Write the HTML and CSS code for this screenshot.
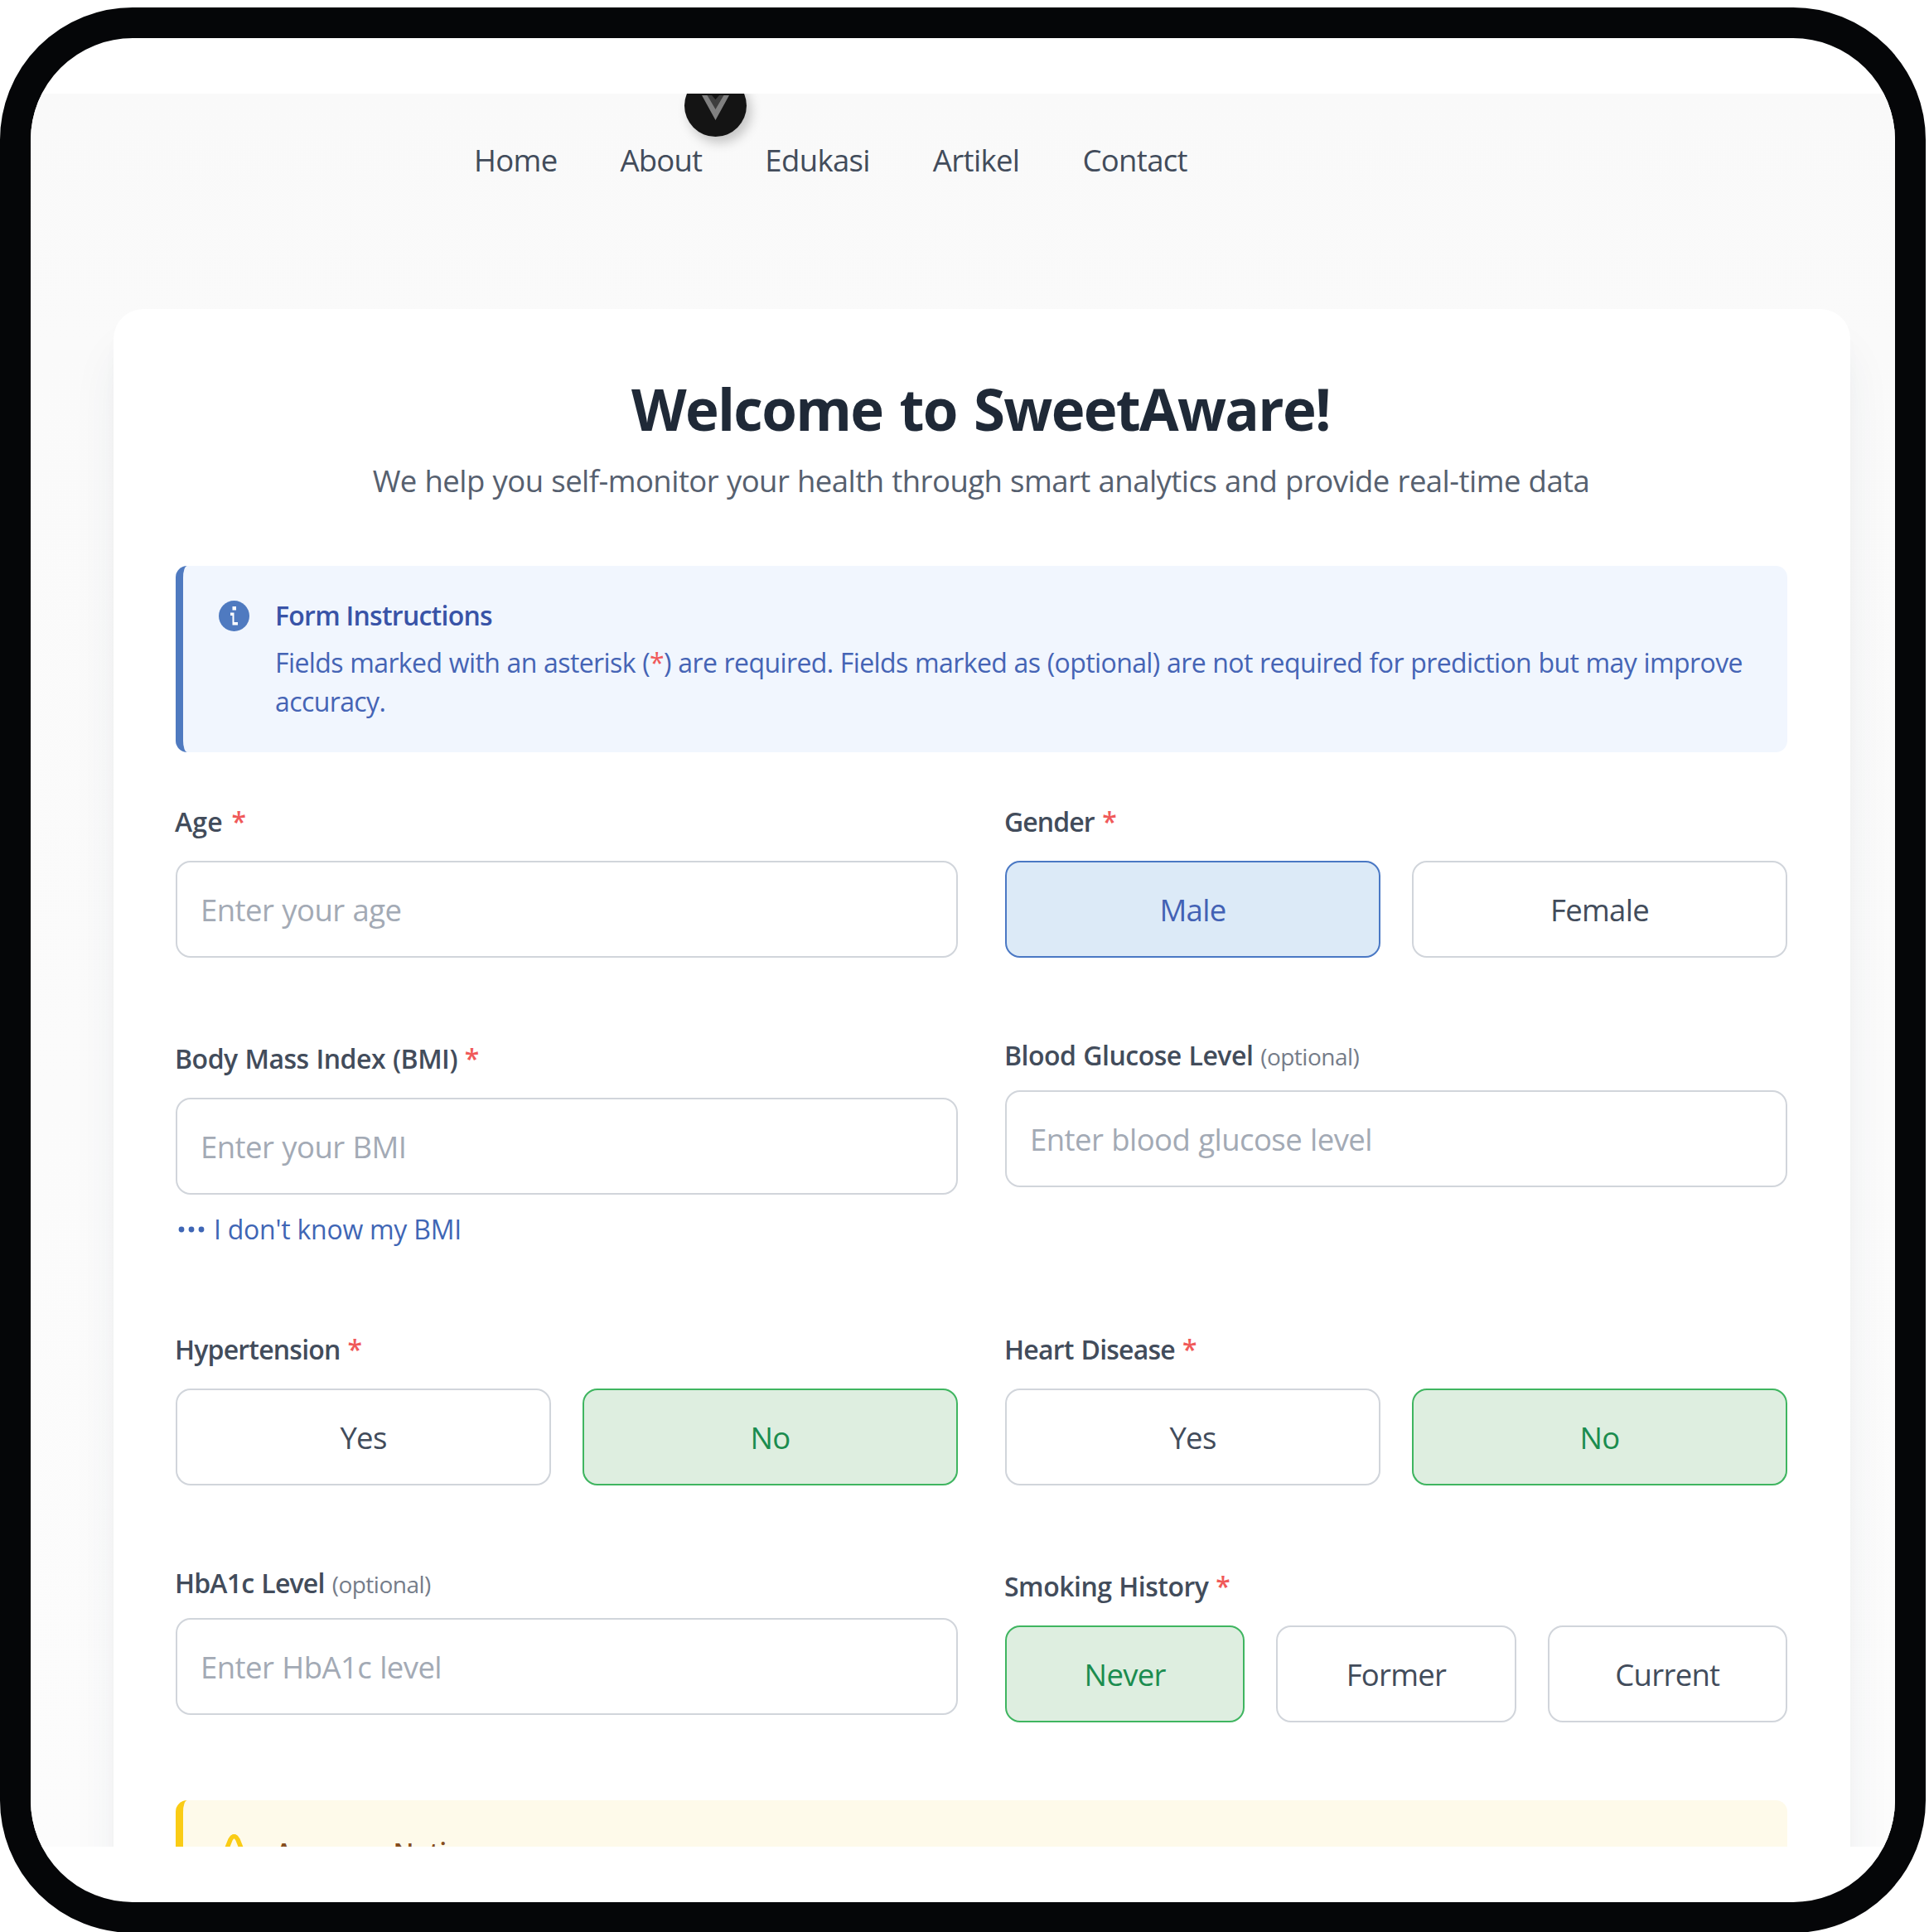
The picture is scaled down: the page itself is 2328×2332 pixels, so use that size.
FILE: index.html
```
<!DOCTYPE html>
<html lang="en">
<head>
<meta charset="utf-8">
<title>SweetAware</title>
<link rel="stylesheet" href="styles.css">
</head>
<body>
<div class="device">
  <div class="app">
    <header class="header">
      <nav class="nav">
        <a>Home</a><a class="about">About</a><a>Edukasi</a><a>Artikel</a><a>Contact</a>
      </nav>
      <div class="logo">
        <svg viewBox="0 0 75 75" width="75" height="75">
          <path d="M21 25h11l5.500 10 5.500-10h11L37.500 55z" fill="#808080"/>
          <path d="M27.500 25h7l3 5 3-5h7L37.500 42z" fill="#3d3d3d"/>
          <path d="M33 25h9l-4.500 5z" fill="#141414"/>
        </svg>
      </div>
    </header>
    <main class="card">
      <h1 class="title">Welcome to SweetAware!</h1>
      <p class="subtitle">We help you self-monitor your health through smart analytics and provide real-time data</p>

      <section class="notice notice-info">
        <svg class="notice-icon" viewBox="0 0 37 37" width="37" height="37">
          <circle cx="18.500" cy="18.500" r="18.500" fill="#4f7ac0"/>
          <rect x="16.500" y="7" width="4.500" height="4.500" fill="#fff"/>
          <path d="M14 14.500h4.500v11.500h4.500v3.500h-6.500v-11.500h-2.500z" fill="#fff"/>
        </svg>
        <div>
          <h2 class="notice-title">Form Instructions</h2>
          <p class="notice-text">Fields marked with an asterisk (<span class="star">*</span>) are required. Fields marked as (optional) are not required for prediction but may improve accuracy.</p>
        </div>
      </section>

      <form class="form">
        <div class="row row-age">
          <div class="field">
            <label class="label label-age">Age <span class="star">*</span></label>
            <input class="input" type="text" placeholder="Enter your age">
          </div>
          <div class="field">
            <label class="label label-gender">Gender <span class="star">*</span></label>
            <div class="options">
              <button type="button" class="option option-blue">Male</button>
              <button type="button" class="option">Female</button>
            </div>
          </div>
        </div>

        <div class="row row-bmi">
          <div class="field field-low">
            <label class="label">Body Mass Index (BMI) <span class="star">*</span></label>
            <input class="input" type="text" placeholder="Enter your BMI">
            <a class="link">
              <svg viewBox="0 0 32 10" width="32" height="10" fill="#3f66b5"><circle cx="4" cy="5" r="3.400"/><circle cx="16" cy="5" r="3.400"/><circle cx="28" cy="5" r="3.400"/></svg>
              <span>I don't know my BMI</span>
            </a>
          </div>
          <div class="field">
            <label class="label label-optional">Blood Glucose Level <span class="hint">(optional)</span></label>
            <input class="input" type="text" placeholder="Enter blood glucose level">
          </div>
        </div>

        <div class="row row-history">
          <div class="field">
            <label class="label label-tight">Hypertension <span class="star">*</span></label>
            <div class="options">
              <button type="button" class="option">Yes</button>
              <button type="button" class="option option-green">No</button>
            </div>
          </div>
          <div class="field">
            <label class="label label-tight">Heart Disease <span class="star">*</span></label>
            <div class="options">
              <button type="button" class="option">Yes</button>
              <button type="button" class="option option-green">No</button>
            </div>
          </div>
        </div>

        <div class="row row-smoking">
          <div class="field">
            <label class="label label-optional label-tight">HbA1c Level <span class="hint">(optional)</span></label>
            <input class="input" type="text" placeholder="Enter HbA1c level">
          </div>
          <div class="field field-low">
            <label class="label">Smoking History <span class="star">*</span></label>
            <div class="options">
              <button type="button" class="option option-green">Never</button>
              <button type="button" class="option">Former</button>
              <button type="button" class="option">Current</button>
            </div>
          </div>
        </div>
      </form>

      <section class="notice notice-warning">
        <svg class="notice-icon" viewBox="0 0 37 37" width="37" height="37" fill="none" stroke="#facc15" stroke-width="5.500" stroke-linejoin="round" stroke-linecap="round">
          <path d="M3.500 33L14 6.500Q18.500 -1.500 23 6.500L33.500 33z"/><path d="M18.500 20v5"/>
        </svg>
        <div>
          <h2 class="notice-title">Accuracy Notice</h2>
        </div>
      </section>
    </main>
  </div>
</div>
</body>
</html>
```
FILE: styles.css
```
* { box-sizing: border-box; }
html, body { height: 2332px; overflow: hidden; }
body {
  margin: 0;
  background: #fff;
  color: #424c5b;
  font-family: "Open Sans", "Noto Sans", sans-serif;
  font-size: 36.5px;
  letter-spacing: -0.45px;
}
h1, h2, p { margin: 0; }
.device {
  width: 2324px;
  height: 2324px;
  margin-top: 9px;
  padding-top: 67px;
  border: 37px solid #050608;
  border-radius: 160px;
  background: #fff;
  overflow: hidden;
}
.app {
  height: 2116px;
  overflow: hidden;
  background: linear-gradient(#f9f9f9, #fafafa 300px, #fcfcfc);
}

/* Header */
.header { position: relative; height: 260px; padding: 55px 0 0 535px; }
.nav { display: flex; gap: 76px; line-height: 50px; letter-spacing: -0.65px; }
.about { letter-spacing: -0.8px; }
.logo {
  position: absolute;
  left: 789px;
  top: -23px;
  width: 75px;
  height: 75px;
  border-radius: 50%;
  background: #141414;
  box-shadow: 5px 7px 14px rgba(0, 0, 0, .22);
}
.logo svg { display: block; }

/* Card */
.card {
  width: 2096px;
  margin-left: 100px;
  padding: 78px 76px 0 75px;
  height: 2200px;
  border-radius: 36px;
  background: #fff;
  box-shadow: 0 47px 59px -6px rgba(40, 60, 90, .08), 0 19px 24px -8px rgba(40, 60, 90, .04);
}
.title {
  margin-left: -2px;
  color: #1f2937;
  font-size: 69px;
  font-weight: 700;
  line-height: 84px;
  letter-spacing: -1.7px;
  word-spacing: 4px;
  text-align: center;
}
.subtitle { margin: 17px 0 0 -1px; color: #56606f; line-height: 56px; text-align: center; letter-spacing: -0.54px; word-spacing: .8px; }

/* Notices */
.notice {
  display: flex;
  gap: 31px;
  padding: 38px 24px 0 43px;
  border-left: 9px solid;
  border-radius: 14px;
}
.notice-icon { flex: none; margin-top: 4px; }
.notice-title { font-size: 32px; font-weight: 600; line-height: 44px; letter-spacing: -0.75px; }
.notice-text { margin-top: 11px; font-size: 32px; line-height: 47px; letter-spacing: -0.6px; word-spacing: .6px; }
.notice-info { height: 225px; margin-top: 75px; border-color: #4f7ac0; background: #f1f6fe; color: #4564b5; }
.notice-info .notice-title { color: #3853a7; }
.notice-warning { height: 225px; border-color: #facc15; background: #fefaea; color: #854d1e; }
.notice-warning .notice-icon { margin-top: 3px; }
.notice-warning .notice-title { margin-top: 3px; letter-spacing: -0.5px; }

/* Form */
.row { display: grid; grid-template-columns: 944px 944px; gap: 57px; align-items: start; }
.row-age { margin-top: 62px; height: 282px; }
.row-bmi { height: 355px; }
.row-history { height: 282px; }
.row-smoking { height: 284px; }
.field { display: flex; flex-direction: column; }
.field-low { padding-top: 4px; }
.label {
  margin: 0 0 25px -1px;
  font-size: 32px;
  font-weight: 600;
  line-height: 44px;
  letter-spacing: -0.5px;
  word-spacing: 1px;
}
.label-optional { margin-bottom: 19px; }
.label-age { letter-spacing: 0.2px; word-spacing: 2px; }
.label-gender { letter-spacing: -0.9px; word-spacing: 2px; }
.label-tight { letter-spacing: -0.8px; word-spacing: 1.500px; }
.star { color: #f05a5a; }
.hint { color: #757c89; font-size: 28px; font-weight: 400; letter-spacing: -0.5px; }
.input {
  width: 100%;
  height: 117px;
  padding: 0 26px 0 28px;
  border: 2px solid #d1d5db;
  border-radius: 18px;
  background: #fff;
  font: inherit;
  letter-spacing: -0.55px;
  word-spacing: 1px;
}
.input::placeholder { color: #a3aab5; opacity: 1; }
.options { display: flex; gap: 38px; }
.option {
  flex: 1 1 0;
  height: 117px;
  padding: 0;
  border: 2px solid #d1d5db;
  border-radius: 18px;
  background: #fff;
  color: #424c5b;
  font: inherit;
  letter-spacing: -0.7px;
}
.option-blue { border-color: #4a78c4; background: #dceaf7; color: #4261b4; }
.option-green { border-color: #3fb560; background: #deeee0; color: #1b8c4f; }
.link { display: flex; align-items: center; gap: 11px; margin: 20px 0 0 3px; color: #3f66b5; font-size: 32px; line-height: 44px; letter-spacing: -0.25px; }
```
